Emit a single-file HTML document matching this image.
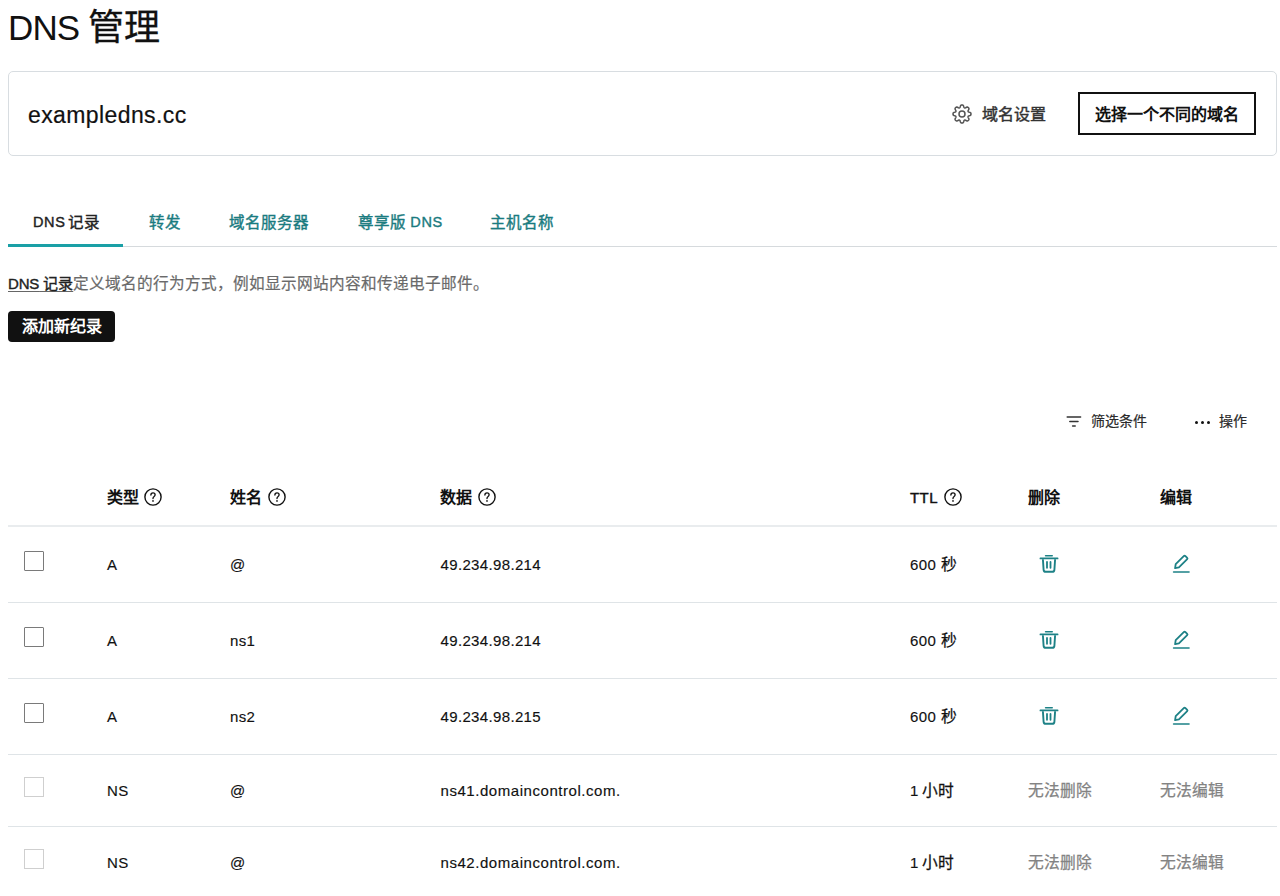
<!DOCTYPE html>
<html lang="zh-CN"><head><meta charset="utf-8">
<style>
*{box-sizing:border-box;margin:0;padding:0}
html,body{width:1280px;height:896px;overflow:hidden;background:#fff}
body{font-family:"Liberation Sans",sans-serif;color:#111;position:relative}
.abs{position:absolute;white-space:nowrap}
.m{-webkit-text-stroke:0.35px currentColor}
.title{left:8px;top:6px;font-size:35px;line-height:44px;color:#111;letter-spacing:-0.9px}
.title .c{font-size:36px;letter-spacing:0;-webkit-text-stroke:0.3px #111}
.card{left:8px;top:71px;width:1269px;height:85px;border:1px solid #d8dde1;border-radius:5px}
.domain{left:28px;top:101px;font-size:23px;line-height:28px;color:#111;letter-spacing:0.4px;-webkit-text-stroke:0.2px #111}
.settings{left:982px;top:104px;font-size:16px;line-height:22px;color:#333;-webkit-text-stroke:0.45px #333}
.btn2{left:1078px;top:92px;width:178px;height:43px;border:2px solid #111;font-size:16px;font-weight:bold;line-height:41px;text-align:center;color:#111}
.tab{top:212px;font-size:15.5px;line-height:22px;color:#1a7b80;-webkit-text-stroke:0.4px currentColor}
.tab .l{font-size:14.5px;letter-spacing:0.6px;position:relative;top:-1px;margin-right:-1.5px}
.tab.active{color:#222}
.tabline{left:8px;top:246px;width:1269px;height:1px;background:#d6dadd}
.tabact{left:8px;top:244px;width:115px;height:3px;background:#1aa0a6}
.desc{left:8px;top:273px;font-size:15.65px;line-height:22px;color:#6a6a6a;-webkit-text-stroke:0.2px currentColor}
.desc u{color:#222;font-size:15px;text-decoration:underline;text-decoration-color:#666;text-decoration-thickness:1px;text-underline-offset:1.5px;-webkit-text-stroke:0.4px #222}
.desc u .l{font-size:15px;letter-spacing:-0.2px}
.addbtn{left:8px;top:311px;width:107px;height:31px;background:#111;border-radius:4px;color:#fff;font-size:16px;font-weight:bold;line-height:31px;text-align:center}
.tool{top:411px;font-size:14px;line-height:21px;color:#2a2a2a;-webkit-text-stroke:0.2px currentColor}
.th{top:487px;font-size:16px;line-height:22px;font-weight:bold;color:#111}
.th.l{font-weight:normal;font-size:15px;letter-spacing:0.4px;-webkit-text-stroke:0.45px #111;top:487px}
.hr{left:8px;width:1269px;height:1px;background:#dfe4e7}
.td{font-size:15px;line-height:22px;color:#111;letter-spacing:0.35px;-webkit-text-stroke:0.15px currentColor}
.td .c{letter-spacing:0;font-size:15.75px;-webkit-text-stroke:0.25px currentColor}
.cb{left:24px;width:20px;height:20px;border:1px solid #7a7a7a;border-radius:1px}
.cb.dis{border-color:#cfcfcf;border-radius:0}
.gray{color:#838383}
</style></head><body>
<div class="abs title">DNS <span class="c">管理</span></div>
<div class="abs card"></div>
<div class="abs domain">exampledns.cc</div>
<svg class="abs" style="left:949.8px;top:101.6px" width="24" height="24" viewBox="0 0 24 24"><path d="M12.00 3.00 L12.31 3.02 L12.62 3.07 L12.93 3.18 L13.21 3.39 L13.46 3.73 L13.65 4.23 L13.80 4.78 L13.94 5.23 L14.10 5.55 L14.28 5.75 L14.47 5.88 L14.69 5.95 L14.94 5.97 L15.24 5.91 L15.61 5.74 L16.08 5.48 L16.58 5.22 L17.03 5.07 L17.42 5.07 L17.73 5.17 L18.00 5.33 L18.25 5.53 L18.47 5.75 L18.67 6.00 L18.83 6.27 L18.93 6.58 L18.93 6.97 L18.78 7.42 L18.52 7.92 L18.26 8.39 L18.09 8.76 L18.03 9.06 L18.05 9.31 L18.12 9.53 L18.25 9.72 L18.45 9.90 L18.77 10.06 L19.22 10.20 L19.77 10.35 L20.27 10.54 L20.61 10.79 L20.82 11.07 L20.93 11.38 L20.98 11.69 L21.00 12.00 L20.98 12.31 L20.93 12.62 L20.82 12.93 L20.61 13.21 L20.27 13.46 L19.77 13.65 L19.22 13.80 L18.77 13.94 L18.45 14.10 L18.25 14.28 L18.12 14.47 L18.05 14.69 L18.03 14.94 L18.09 15.24 L18.26 15.61 L18.52 16.08 L18.78 16.58 L18.93 17.03 L18.93 17.42 L18.83 17.73 L18.67 18.00 L18.47 18.25 L18.25 18.47 L18.00 18.67 L17.73 18.83 L17.42 18.93 L17.03 18.93 L16.58 18.78 L16.08 18.52 L15.61 18.26 L15.24 18.09 L14.94 18.03 L14.69 18.05 L14.47 18.12 L14.28 18.25 L14.10 18.45 L13.94 18.77 L13.80 19.22 L13.65 19.77 L13.46 20.27 L13.21 20.61 L12.93 20.82 L12.62 20.93 L12.31 20.98 L12.00 21.00 L11.69 20.98 L11.38 20.93 L11.07 20.82 L10.79 20.61 L10.54 20.27 L10.35 19.77 L10.20 19.22 L10.06 18.77 L9.90 18.45 L9.72 18.25 L9.53 18.12 L9.31 18.05 L9.06 18.03 L8.76 18.09 L8.39 18.26 L7.92 18.52 L7.42 18.78 L6.97 18.93 L6.58 18.93 L6.27 18.83 L6.00 18.67 L5.75 18.47 L5.53 18.25 L5.33 18.00 L5.17 17.73 L5.07 17.42 L5.07 17.03 L5.22 16.58 L5.48 16.08 L5.74 15.61 L5.91 15.24 L5.97 14.94 L5.95 14.69 L5.88 14.47 L5.75 14.28 L5.55 14.10 L5.23 13.94 L4.78 13.80 L4.23 13.65 L3.73 13.46 L3.39 13.21 L3.18 12.93 L3.07 12.62 L3.02 12.31 L3.00 12.00 L3.02 11.69 L3.07 11.38 L3.18 11.07 L3.39 10.79 L3.73 10.54 L4.23 10.35 L4.78 10.20 L5.23 10.06 L5.55 9.90 L5.75 9.72 L5.88 9.53 L5.95 9.31 L5.97 9.06 L5.91 8.76 L5.74 8.39 L5.48 7.92 L5.22 7.42 L5.07 6.97 L5.07 6.58 L5.17 6.27 L5.33 6.00 L5.53 5.75 L5.75 5.53 L6.00 5.33 L6.27 5.17 L6.58 5.07 L6.97 5.07 L7.42 5.22 L7.92 5.48 L8.39 5.74 L8.76 5.91 L9.06 5.97 L9.31 5.95 L9.53 5.88 L9.72 5.75 L9.90 5.55 L10.06 5.23 L10.20 4.78 L10.35 4.23 L10.54 3.73 L10.79 3.39 L11.07 3.18 L11.38 3.07 L11.69 3.02Z" fill="none" stroke="#555" stroke-width="1.5" stroke-linejoin="round"/><circle cx="12" cy="12" r="3.0" fill="none" stroke="#555" stroke-width="1.5"/></svg>
<div class="abs settings">域名设置</div>
<div class="abs btn2">选择一个不同的域名</div>
<div class="abs tab active" style="left:33px"><span class="l">DNS</span> 记录</div>
<div class="abs tab" style="left:149px">转发</div>
<div class="abs tab" style="left:229px">域名服务器</div>
<div class="abs tab" style="left:358px">尊享版 <span class="l">DNS</span></div>
<div class="abs tab" style="left:490px">主机名称</div>
<div class="abs tabline"></div>
<div class="abs tabact"></div>
<div class="abs desc"><u><span class="l">DNS</span> 记录</u>定义域名的行为方式，例如显示网站内容和传递电子邮件。</div>
<div class="abs addbtn">添加新纪录</div>
<svg class="abs" style="left:1064px;top:413px" width="20" height="16" viewBox="0 0 20 16"><path d="M3.2 4H16.6M5.8 8.5H14M8.6 13H11.2" stroke="#333" stroke-width="1.5" stroke-linecap="round"/></svg>
<div class="abs tool" style="left:1091px">筛选条件</div>
<div class="abs" style="left:1194.5px;top:420.5px;width:3.2px;height:3.2px;border-radius:50%;background:#111"></div>
<div class="abs" style="left:1200.5px;top:420.5px;width:3.2px;height:3.2px;border-radius:50%;background:#111"></div>
<div class="abs" style="left:1206.5px;top:420.5px;width:3.2px;height:3.2px;border-radius:50%;background:#111"></div>
<div class="abs tool" style="left:1219px">操作</div>
<div class="abs th" style="left:107px">类型</div>
<svg class="abs" style="left:144.3px;top:488.3px" width="18" height="18" viewBox="0 0 18 18"><circle cx="9" cy="9" r="8.1" fill="none" stroke="#111" stroke-width="1.4"/><path d="M6.9 7.1C6.9 5.6 7.8 4.9 9 4.9C10.3 4.9 11.1 5.7 11.1 6.8C11.1 7.7 10.6 8.2 9.9 8.7C9.2 9.2 9 9.6 9 10.6" fill="none" stroke="#111" stroke-width="1.35" stroke-linecap="round"/><circle cx="9" cy="12.95" r="0.85" fill="#111"/></svg>
<div class="abs th" style="left:230px">姓名</div>
<svg class="abs" style="left:268.2px;top:488.3px" width="18" height="18" viewBox="0 0 18 18"><circle cx="9" cy="9" r="8.1" fill="none" stroke="#111" stroke-width="1.4"/><path d="M6.9 7.1C6.9 5.6 7.8 4.9 9 4.9C10.3 4.9 11.1 5.7 11.1 6.8C11.1 7.7 10.6 8.2 9.9 8.7C9.2 9.2 9 9.6 9 10.6" fill="none" stroke="#111" stroke-width="1.35" stroke-linecap="round"/><circle cx="9" cy="12.95" r="0.85" fill="#111"/></svg>
<div class="abs th" style="left:440px">数据</div>
<svg class="abs" style="left:478.2px;top:488.3px" width="18" height="18" viewBox="0 0 18 18"><circle cx="9" cy="9" r="8.1" fill="none" stroke="#111" stroke-width="1.4"/><path d="M6.9 7.1C6.9 5.6 7.8 4.9 9 4.9C10.3 4.9 11.1 5.7 11.1 6.8C11.1 7.7 10.6 8.2 9.9 8.7C9.2 9.2 9 9.6 9 10.6" fill="none" stroke="#111" stroke-width="1.35" stroke-linecap="round"/><circle cx="9" cy="12.95" r="0.85" fill="#111"/></svg>
<div class="abs th l" style="left:910px">TTL</div>
<svg class="abs" style="left:944px;top:488.3px" width="18" height="18" viewBox="0 0 18 18"><circle cx="9" cy="9" r="8.1" fill="none" stroke="#111" stroke-width="1.4"/><path d="M6.9 7.1C6.9 5.6 7.8 4.9 9 4.9C10.3 4.9 11.1 5.7 11.1 6.8C11.1 7.7 10.6 8.2 9.9 8.7C9.2 9.2 9 9.6 9 10.6" fill="none" stroke="#111" stroke-width="1.35" stroke-linecap="round"/><circle cx="9" cy="12.95" r="0.85" fill="#111"/></svg>
<div class="abs th" style="left:1028px">删除</div>
<div class="abs th" style="left:1160px">编辑</div>
<div class="abs hr" style="top:525px;height:2px;background:#e9ecee"></div>
<div class="abs cb" style="top:551px"></div>
<div class="abs td" style="left:107px;top:554px">A</div>
<div class="abs td" style="left:230px;top:554px">@</div>
<div class="abs td" style="left:440.5px;top:554px;letter-spacing:0.35px">49.234.98.214</div>
<div class="abs td" style="left:910px;top:554px">600 <span class="c">秒</span></div>
<svg class="abs" style="left:1034px;top:550px" width="30" height="28" viewBox="0 0 30 28"><path d="M11.6 5.8H18.2" stroke="#1d8186" stroke-width="1.6" stroke-linecap="round"/><path d="M6.4 8.4H23.6" stroke="#1d8186" stroke-width="1.7" stroke-linecap="round"/><path d="M8.9 9.2L9.6 19.8Q9.8 21.8 11.8 21.8H18.2Q20.2 21.8 20.4 19.8L21.1 9.2" fill="none" stroke="#1d8186" stroke-width="1.9" stroke-linejoin="round"/><path d="M13 12V17.8M16.5 12V17.8" stroke="#1d8186" stroke-width="1.8" stroke-linecap="round"/></svg>
<svg class="abs" style="left:1166px;top:550px" width="30" height="28" viewBox="0 0 30 28"><path d="M9.1 18.2L9.7 14.2L18 5.9Q18.6 5.3 19.2 5.9L21.2 7.9Q21.8 8.5 21.2 9.1L12.9 17.4Z" fill="none" stroke="#1d8186" stroke-width="1.8" stroke-linejoin="round"/><path d="M7.6 22H23" stroke="#1d8186" stroke-width="1.6" stroke-linecap="round"/></svg>
<div class="abs cb" style="top:627px"></div>
<div class="abs td" style="left:107px;top:630px">A</div>
<div class="abs td" style="left:230px;top:630px">ns1</div>
<div class="abs td" style="left:440.5px;top:630px;letter-spacing:0.35px">49.234.98.214</div>
<div class="abs td" style="left:910px;top:630px">600 <span class="c">秒</span></div>
<svg class="abs" style="left:1034px;top:626px" width="30" height="28" viewBox="0 0 30 28"><path d="M11.6 5.8H18.2" stroke="#1d8186" stroke-width="1.6" stroke-linecap="round"/><path d="M6.4 8.4H23.6" stroke="#1d8186" stroke-width="1.7" stroke-linecap="round"/><path d="M8.9 9.2L9.6 19.8Q9.8 21.8 11.8 21.8H18.2Q20.2 21.8 20.4 19.8L21.1 9.2" fill="none" stroke="#1d8186" stroke-width="1.9" stroke-linejoin="round"/><path d="M13 12V17.8M16.5 12V17.8" stroke="#1d8186" stroke-width="1.8" stroke-linecap="round"/></svg>
<svg class="abs" style="left:1166px;top:626px" width="30" height="28" viewBox="0 0 30 28"><path d="M9.1 18.2L9.7 14.2L18 5.9Q18.6 5.3 19.2 5.9L21.2 7.9Q21.8 8.5 21.2 9.1L12.9 17.4Z" fill="none" stroke="#1d8186" stroke-width="1.8" stroke-linejoin="round"/><path d="M7.6 22H23" stroke="#1d8186" stroke-width="1.6" stroke-linecap="round"/></svg>
<div class="abs cb" style="top:703px"></div>
<div class="abs td" style="left:107px;top:706px">A</div>
<div class="abs td" style="left:230px;top:706px">ns2</div>
<div class="abs td" style="left:440.5px;top:706px;letter-spacing:0.35px">49.234.98.215</div>
<div class="abs td" style="left:910px;top:706px">600 <span class="c">秒</span></div>
<svg class="abs" style="left:1034px;top:702px" width="30" height="28" viewBox="0 0 30 28"><path d="M11.6 5.8H18.2" stroke="#1d8186" stroke-width="1.6" stroke-linecap="round"/><path d="M6.4 8.4H23.6" stroke="#1d8186" stroke-width="1.7" stroke-linecap="round"/><path d="M8.9 9.2L9.6 19.8Q9.8 21.8 11.8 21.8H18.2Q20.2 21.8 20.4 19.8L21.1 9.2" fill="none" stroke="#1d8186" stroke-width="1.9" stroke-linejoin="round"/><path d="M13 12V17.8M16.5 12V17.8" stroke="#1d8186" stroke-width="1.8" stroke-linecap="round"/></svg>
<svg class="abs" style="left:1166px;top:702px" width="30" height="28" viewBox="0 0 30 28"><path d="M9.1 18.2L9.7 14.2L18 5.9Q18.6 5.3 19.2 5.9L21.2 7.9Q21.8 8.5 21.2 9.1L12.9 17.4Z" fill="none" stroke="#1d8186" stroke-width="1.8" stroke-linejoin="round"/><path d="M7.6 22H23" stroke="#1d8186" stroke-width="1.6" stroke-linecap="round"/></svg>
<div class="abs cb dis" style="top:777px"></div>
<div class="abs td" style="left:107px;top:780px">NS</div>
<div class="abs td" style="left:230px;top:780px">@</div>
<div class="abs td" style="left:440.5px;top:780px;letter-spacing:0.55px">ns41.domaincontrol.com.</div>
<div class="abs td" style="left:910px;top:780px">1<span class="c" style="margin-left:3px">小时</span></div>
<div class="abs td gray" style="left:1028px;top:780px"><span class="c">无法删除</span></div>
<div class="abs td gray" style="left:1160px;top:780px"><span class="c">无法编辑</span></div>
<div class="abs cb dis" style="top:849px"></div>
<div class="abs td" style="left:107px;top:852px">NS</div>
<div class="abs td" style="left:230px;top:852px">@</div>
<div class="abs td" style="left:440.5px;top:852px;letter-spacing:0.55px">ns42.domaincontrol.com.</div>
<div class="abs td" style="left:910px;top:852px">1<span class="c" style="margin-left:3px">小时</span></div>
<div class="abs td gray" style="left:1028px;top:852px"><span class="c">无法删除</span></div>
<div class="abs td gray" style="left:1160px;top:852px"><span class="c">无法编辑</span></div>
<div class="abs hr" style="top:602px"></div>
<div class="abs hr" style="top:678px"></div>
<div class="abs hr" style="top:754px"></div>
<div class="abs hr" style="top:826px"></div>
</body></html>
